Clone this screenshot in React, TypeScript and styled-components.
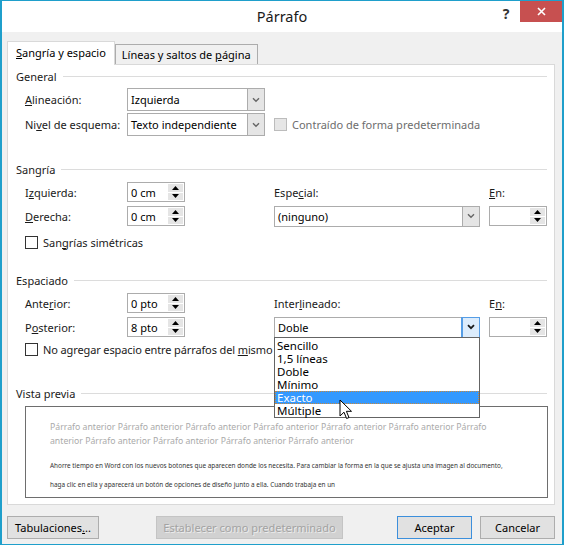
import styled, { createGlobalStyle } from 'styled-components';

const GlobalStyle = createGlobalStyle`
  html, body {
    margin: 0;
    padding: 0;
    background: #fff;
  }
  body {
    font-family: "Noto Sans", "Open Sans", sans-serif;
    font-size: 11px;
    color: #000;
  }
  * {
    box-sizing: border-box;
  }
`;

const Window = styled.div`
  width: 564px;
  height: 545px;
  border: 1px solid #1f9fcb;
  border-left-width: 2px;
  border-right-width: 2px;
  background: #f0f0f0;
  display: flex;
  flex-direction: column;
`;

const TitleBar = styled.div`
  height: 31px;
  background: #fff;
  display: grid;
  grid-template-columns: 1fr auto 1fr;
`;

const Title = styled.div`
  grid-column: 2;
  font-size: 14.5px;
  line-height: 30px;
  color: #1a1a1a;
`;

const TitleButtons = styled.div`
  grid-column: 3;
  display: flex;
  justify-content: flex-end;
  align-items: flex-start;
`;

const HelpButton = styled.div`
  width: 28px;
  height: 24px;
  font-size: 14px;
  font-weight: bold;
  line-height: 26px;
  text-align: center;
  color: #333;
`;

const CloseButton = styled.div`
  width: 42px;
  height: 21px;
  background: #c75050;
  display: flex;
  align-items: center;
  justify-content: center;
`;

const Body = styled.div`
  flex: 1;
  padding: 9px 7px 0 5px;
  display: flex;
  flex-direction: column;
`;

const TabRow = styled.div`
  height: 23px;
  display: flex;
  align-items: flex-end;
`;

const Tab = styled.div<{ $active?: boolean }>`
  position: relative;
  z-index: ${p => (p.$active ? 1 : 0)};
  height: ${p => (p.$active ? '24px' : '20px')};
  margin-bottom: ${p => (p.$active ? '-1px' : '0')};
  padding: ${p => (p.$active ? '0 8px' : '0 6px')};
  background: ${p => (p.$active ? '#fff' : '#f0f0f0')};
  border: 1px solid ${p => (p.$active ? '#d9d9d9' : '#acacac')};
  border-bottom: none;
  display: flex;
  align-items: center;
  padding-bottom: ${p => (p.$active ? '3px' : '0')};
`;

const Panel = styled.div`
  height: 441px;
  background: #fff;
  border: 1px solid #d9d9d9;
  padding: 0 7px 0 8px;
  display: flex;
  flex-direction: column;
`;

const Key = styled.span`
  text-decoration: underline;
  text-underline-offset: 1px;
`;

const GroupHeader = styled.div<{ $top: number }>`
  height: 16px;
  margin-top: ${p => p.$top}px;
  display: flex;
  align-items: center;
  color: #1a1a1a;
  &::after {
    content: '';
    flex: 1;
    height: 1px;
    margin-left: 6px;
    background: #dcdcdc;
  }
`;

const FieldGrid = styled.div<{ $rows: string }>`
  display: grid;
  grid-template-columns: 102px 147px 215px 58px;
  grid-template-rows: ${p => p.$rows};
  align-items: center;
  margin: 3px 0 0 9px;
`;

const Label = styled.span<{ $muted?: boolean; $tight?: boolean }>`
  color: ${p => (p.$muted ? '#6d6d6d' : '#1a1a1a')};
  letter-spacing: ${p => (p.$tight ? '-0.12px' : 'normal')};
  white-space: nowrap;
`;

const Select = styled.div<{ $w: number; $h: number }>`
  position: relative;
  width: ${p => p.$w}px;
  height: ${p => p.$h}px;
  border: 1px solid #acacac;
  background: #fff;
  display: flex;
`;

const SelectText = styled.span`
  flex: 1;
  display: flex;
  align-items: center;
  padding-left: 3px;
`;

const SelectArrow = styled.div<{ $open?: boolean }>`
  width: 17px;
  background: ${p => (p.$open ? '#dcecfc' : '#e5e5e5')};
  border-left: 1px solid ${p => (p.$open ? '#569de5' : '#acacac')};
  outline: ${p => (p.$open ? '1px solid #569de5' : 'none')};
  display: flex;
  align-items: center;
  justify-content: center;
`;

const SpinBox = styled.div`
  width: 58px;
  height: 20px;
  border: 1px solid #acacac;
  background: #fff;
  display: flex;
`;

const SpinText = styled.span`
  flex: 1;
  display: flex;
  align-items: center;
  padding-left: 3px;
`;

const SpinButtons = styled.div`
  width: 16px;
  padding: 1px 1px 1px 0;
  display: flex;
  flex-direction: column;
  gap: 1px;
`;

const SpinHalf = styled.div`
  flex: 1;
  background: #e5e5e5;
  display: flex;
  align-items: center;
  justify-content: center;
`;

const CheckRow = styled.label<{ $span?: 'all' | 'left' }>`
  grid-column: ${p => (p.$span === 'all' ? '1 / -1' : p.$span === 'left' ? '1 / 3' : '3 / -1')};
  display: flex;
  align-items: center;
  gap: 5px;
  white-space: nowrap;
`;

const CheckBox = styled.span<{ $disabled?: boolean }>`
  width: 13px;
  height: 13px;
  flex: none;
  border: 1px solid ${p => (p.$disabled ? '#bcbcbc' : '#333')};
  background: ${p => (p.$disabled ? '#e6e6e6' : '#fff')};
`;

const DropList = styled.ul`
  position: absolute;
  z-index: 2;
  top: 100%;
  left: -1px;
  right: -1px;
  margin: 0;
  padding: 1px 0 0;
  list-style: none;
  background: #fff;
  border: 1px solid #646464;
`;

const DropItem = styled.li<{ $selected?: boolean }>`
  height: 13px;
  padding: 1px 0 0 2px;
  line-height: 12px;
  font-size: 11.5px;
  color: ${p => (p.$selected ? '#fff' : '#000')};
  background: ${p => (p.$selected ? '#3399ff' : 'transparent')};
  outline: ${p => (p.$selected ? '1px dotted #c8883c' : 'none')};
  outline-offset: -1px;
`;

const Cursor = styled.svg`
  position: absolute;
  left: 64px;
  top: 61px;
`;

const Preview = styled.div`
  width: 523px;
  height: 92px;
  margin: 5px 0 0 9px;
  border: 1px solid #6e6e6e;
  padding: 13px 0 0 24px;
  overflow: hidden;
`;

const PrevLine = styled.div`
  font-size: 8.7px;
  line-height: 14px;
  color: #aaaaaa;
  white-space: nowrap;
`;

const CurText = styled.div`
  margin-top: 8px;
`;

const CurLine = styled.div`
  font-size: 6.4px;
  line-height: 19px;
  color: #333;
  white-space: nowrap;
`;

const ButtonRow = styled.div`
  margin-top: 11px;
  display: flex;
`;

const Button = styled.div<{ $w: number; $default?: boolean; $disabled?: boolean }>`
  width: ${p => p.$w}px;
  height: 23px;
  display: flex;
  align-items: center;
  justify-content: center;
  background: ${p => (p.$disabled ? '#d1d1d1' : '#e1e1e1')};
  border: 1px solid ${p => (p.$default ? '#3c8fdc' : p.$disabled ? '#c4c4c4' : '#adadad')};
  color: ${p => (p.$disabled ? '#a3a3a3' : '#000')};
  text-shadow: ${p => (p.$disabled ? '1px 1px 0 #ececec' : 'none')};
  white-space: nowrap;
`;

const Spacer = styled.div<{ $w?: number }>`
  flex: ${p => (p.$w ? 'none' : '1')};
  width: ${p => (p.$w ? `${p.$w}px` : 'auto')};
`;

const Chevron = ({ dark }: { dark?: boolean }) => (
  <svg width="8" height="6" viewBox="0 0 8 6">
    <path d="M1 1.2 L4 4.2 L7 1.2" fill="none" stroke={dark ? '#1a1a1a' : '#666'} strokeWidth={dark ? 1.8 : 1.4} />
  </svg>
);

const Spinner = ({ value }: { value: string }) => (
  <SpinBox>
    <SpinText>{value}</SpinText>
    <SpinButtons>
      <SpinHalf>
        <svg width="7" height="4" viewBox="0 0 7 4">
          <path d="M0 4 L3.5 0 L7 4 Z" fill="#000" />
        </svg>
      </SpinHalf>
      <SpinHalf>
        <svg width="7" height="4" viewBox="0 0 7 4">
          <path d="M0 0 L3.5 4 L7 0 Z" fill="#000" />
        </svg>
      </SpinHalf>
    </SpinButtons>
  </SpinBox>
);

const lineOptions = ['Sencillo', '1,5 líneas', 'Doble', 'Mínimo', 'Exacto', 'Múltiple'];

const App = () => {
  return (
    <Window>
      <GlobalStyle />
      <TitleBar>
        <Title>Párrafo</Title>
        <TitleButtons>
          <HelpButton>?</HelpButton>
          <CloseButton>
            <svg width="9" height="9" viewBox="0 0 9 9">
              <path d="M1 1 L8 8 M8 1 L1 8" stroke="#fff" strokeWidth="1.6" />
            </svg>
          </CloseButton>
        </TitleButtons>
      </TitleBar>

      <Body>
        <TabRow>
          <Tab $active>
            <span><Key>S</Key>angría y espacio</span>
          </Tab>
          <Tab>
            <span>Líneas y saltos de <Key>p</Key>ágina</span>
          </Tab>
        </TabRow>

        <Panel>
          <GroupHeader $top={3}>General</GroupHeader>
          <FieldGrid $rows="25px 25px">
            <Label><Key>A</Key>lineación:</Label>
            <Select $w={138} $h={23}>
              <SelectText>Izquierda</SelectText>
              <SelectArrow><Chevron /></SelectArrow>
            </Select>
            <span />
            <span />
            <Label>Ni<Key>v</Key>el de esquema:</Label>
            <Select $w={138} $h={23}>
              <SelectText>Texto independiente</SelectText>
              <SelectArrow><Chevron /></SelectArrow>
            </Select>
            <CheckRow>
              <CheckBox $disabled />
              <Label $muted>Contraído de forma predeterminada</Label>
            </CheckRow>
          </FieldGrid>

          <GroupHeader $top={24}>Sangría</GroupHeader>
          <FieldGrid $rows="24px 24px 28px">
            <Label>I<Key>z</Key>quierda:</Label>
            <Spinner value="0 cm" />
            <Label>Espe<Key>c</Key>ial:</Label>
            <Label><Key>E</Key>n:</Label>
            <Label><Key>D</Key>erecha:</Label>
            <Spinner value="0 cm" />
            <Select $w={206} $h={21}>
              <SelectText>(ninguno)</SelectText>
              <SelectArrow><Chevron /></SelectArrow>
            </Select>
            <Spinner value="" />
            <CheckRow $span="all">
              <CheckBox />
              <Label>San<Key>g</Key>rías simétricas</Label>
            </CheckRow>
          </FieldGrid>

          <GroupHeader $top={16}>Espaciado</GroupHeader>
          <FieldGrid $rows="24px 24px 20px">
            <Label>Ante<Key>r</Key>ior:</Label>
            <Spinner value="0 pto" />
            <Label>Inter<Key>l</Key>ineado:</Label>
            <Label>E<Key>n</Key>:</Label>
            <Label>P<Key>o</Key>sterior:</Label>
            <Spinner value="8 pto" />
            <Select $w={206} $h={21}>
              <SelectText>Doble</SelectText>
              <SelectArrow $open><Chevron dark /></SelectArrow>
              <DropList>
                {lineOptions.map(option => (
                  <DropItem key={option} $selected={option === 'Exacto'}>
                    {option}
                  </DropItem>
                ))}
                <Cursor width="14" height="21" viewBox="0 0 14 21">
                  <path
                    d="M1 1 L1 17 L5 13.2 L7.6 19.5 L10 18.5 L7.4 12.3 L12.5 12.3 Z"
                    fill="#fff"
                    stroke="#000"
                    strokeWidth="1"
                    strokeLinejoin="miter"
                  />
                </Cursor>
              </DropList>
            </Select>
            <Spinner value="" />
            <CheckRow $span="left">
              <CheckBox />
              <Label $tight>No agregar espacio entre párrafos del <Key>m</Key>ismo</Label>
            </CheckRow>
          </FieldGrid>

          <GroupHeader $top={26}>Vista previa</GroupHeader>
          <Preview>
            <PrevLine>
              Párrafo anterior Párrafo anterior Párrafo anterior Párrafo anterior Párrafo anterior Párrafo anterior Párrafo
            </PrevLine>
            <PrevLine>anterior Párrafo anterior Párrafo anterior Párrafo anterior Párrafo anterior</PrevLine>
            <CurText>
              <CurLine>
                Ahorre tiempo en Word con los nuevos botones que aparecen donde los necesita. Para cambiar la forma en la que se ajusta una imagen al documento,
              </CurLine>
              <CurLine>
                haga clic en ella y aparecerá un botón de opciones de diseño junto a ella. Cuando trabaja en un
              </CurLine>
            </CurText>
          </Preview>
        </Panel>

        <ButtonRow>
          <Button $w={92}>Tabulaciones<Key>.</Key>..</Button>
          <Spacer $w={57} />
          <Button $w={187} $disabled>Establecer como predeterminado</Button>
          <Spacer />
          <Button $w={75} $default>Aceptar</Button>
          <Spacer $w={8} />
          <Button $w={75}>Cancelar</Button>
        </ButtonRow>
      </Body>
    </Window>
  );
};

export default App;
